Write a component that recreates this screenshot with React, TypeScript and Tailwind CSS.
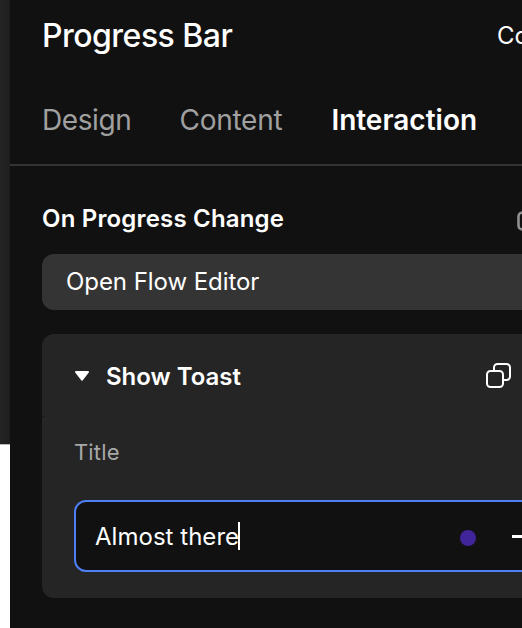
function CopyIcon({ className }: { className: string }) {
  return (
    <svg className={className} viewBox="0 0 25 25" fill="none" stroke="currentColor" strokeWidth="2">
      <rect x="1" y="8" width="16" height="16" rx="3.5" />
      <path d="M8 8V4.5A3.5 3.5 0 0 1 11.5 1h9A3.5 3.5 0 0 1 24 4.5v9a3.5 3.5 0 0 1-3.5 3.5H17" />
    </svg>
  );
}

function PanelIcon({ className }: { className: string }) {
  return (
    <svg className={className} viewBox="0 0 20 20" fill="none" stroke="currentColor" strokeWidth="2.6">
      <rect x="1.5" y="1.5" width="17" height="17" rx="4" />
    </svg>
  );
}

function Header() {
  return (
    <header className="flex h-[70px] items-center justify-between pl-8 whitespace-nowrap">
      <h1 className="pt-0.5 text-[32px] leading-10 font-medium tracking-[-0.52px]">Progress Bar</h1>
      <div className="w-[25px] shrink-0 pt-px text-2xl">Co</div>
    </header>
  );
}

function Tabs() {
  return (
    <nav className="flex h-24 items-center gap-12 border-b-2 border-[#333333] pt-1.5 pl-8 text-[28px] whitespace-nowrap text-[#a0a0a0]">
      <span className="tracking-[-0.4px]">Design</span>
      <span className="tracking-[-0.25px]">Content</span>
      <span className="pl-px font-semibold text-white">Interaction</span>
    </nav>
  );
}

function ToastCard() {
  return (
    <section className="mt-6 w-[520px]">
      <div className="flex h-[83px] items-center rounded-t-xl rounded-bl-[3px] bg-[#252525] pt-0.5 pl-8">
        <svg className="mb-px h-[10px] w-4 shrink-0" viewBox="0 0 16 10" fill="white">
          <path d="M2 0h12a1 1 0 0 1 .8 1.6l-6 7.7a1 1 0 0 1-1.6 0l-6-7.7A1 1 0 0 1 2 0z" />
        </svg>
        <h3 className="ml-4 w-[380px] text-2xl font-semibold">Show Toast</h3>
        <CopyIcon className="mb-0.5 size-[25px] shrink-0" />
      </div>
      <div className="h-[181px] rounded-b-xl bg-[#252525] pt-[19px] pl-8">
        <label className="block text-[22px] leading-8 tracking-[0.15px] text-[#a8a8a8]">Title</label>
        <div className="mt-8 flex h-[72px] items-center rounded-xl border-2 border-[#4f7ff5] bg-[#111111] pl-[19px]">
          <div className="flex w-[365px] items-center text-2xl tracking-[0.03px]">
            <span className="pt-0.5">Almost there</span>
            <span className="-ml-px h-7 w-0.5 bg-white" />
          </div>
          <span className="mt-1 size-4 shrink-0 rounded-full bg-[#40249a]" />
          <span className="ml-9 h-[3px] w-6 shrink-0 bg-white" />
        </div>
      </div>
    </section>
  );
}

export default function App() {
  return (
    <main className="flex h-[628px] w-[522px] overflow-hidden bg-[#111111] font-['Inter',sans-serif] text-white">
      <aside className="flex w-2.5 shrink-0 flex-col">
        <div className="h-[444px] bg-linear-to-r from-[#242424] to-[#1e1e1e]" />
        <div className="flex-1 border-t border-[#bbbbbb] bg-white" />
      </aside>
      <div className="w-[512px] shrink-0 overflow-hidden">
        <Header />
        <Tabs />
        <div className="pt-[35px] pl-8">
          <div className="flex h-9 items-center justify-between whitespace-nowrap">
            <h2 className="text-2xl font-semibold tracking-[0.18px]">On Progress Change</h2>
            <div className="w-[5px] shrink-0 pt-1">
              <PanelIcon className="h-5 w-5 text-[#909090]" />
            </div>
          </div>
          <div className="mt-[17px] flex h-14 w-[520px] items-center rounded-xl bg-[#343434] pl-6 text-2xl tracking-[-0.06px]">
            Open Flow Editor
          </div>
          <ToastCard />
        </div>
      </div>
    </main>
  );
}
